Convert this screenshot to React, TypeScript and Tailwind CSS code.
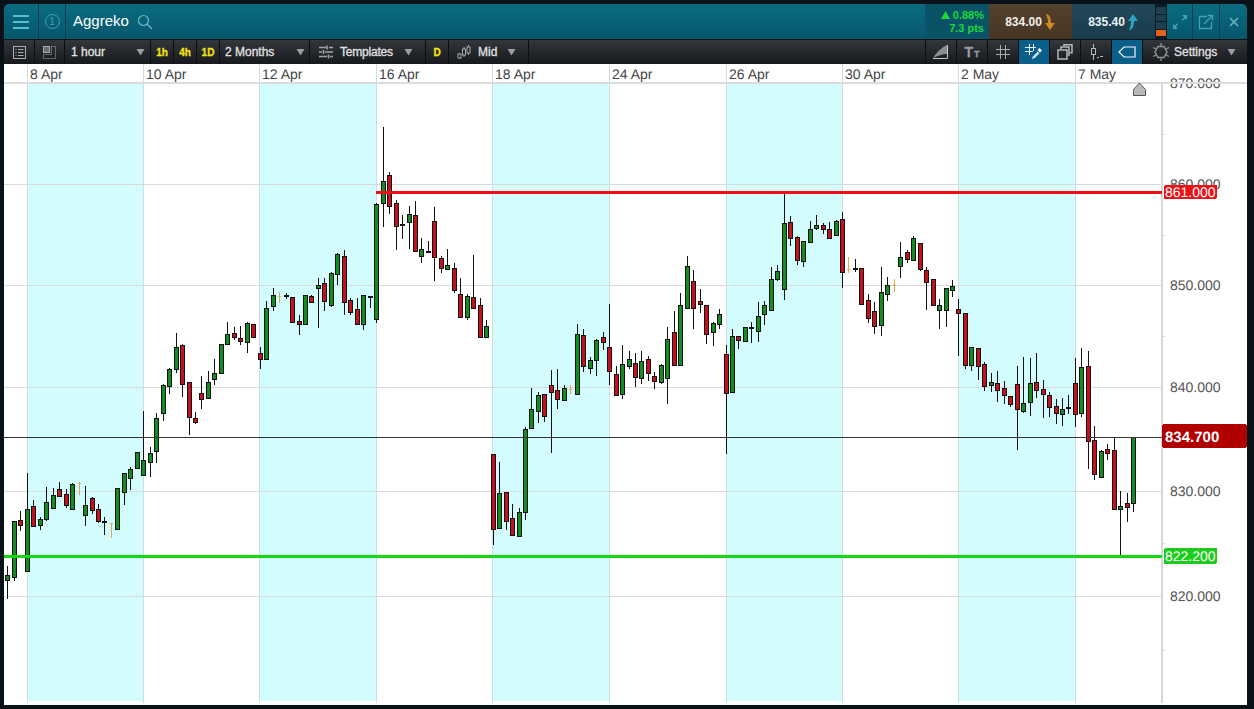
import type { ReactNode } from "react";

type Candle = [number, number, number, number, "g" | "r" | "k" | "o"];

// high, body top, body bottom, low (page pixels), one per hour bar
const candles: Candle[] = [
  [566, 575, 580, 599, "g"], [521, 521, 577, 581, "g"], [511, 520, 525, 531, "r"], [473, 509, 571, 572, "g"],
  [500, 506, 526, 526, "r"], [517, 519, 525, 530, "g"], [487, 502, 519, 521, "g"], [488, 495, 508, 508, "g"],
  [482, 489, 496, 496, "r"], [489, 494, 505, 508, "r"], [483, 484, 509, 509, "g"], [482, 483, 483, 495, "o"],
  [486, 505, 515, 526, "g"], [497, 498, 510, 514, "r"], [504, 509, 521, 523, "r"], [517, 522, 522, 535, "k"],
  [523, 523, 523, 538, "o"], [488, 488, 529, 529, "g"], [473, 473, 492, 505, "g"], [467, 469, 478, 490, "g"],
  [452, 452, 468, 468, "g"], [411, 460, 475, 475, "g"], [447, 453, 462, 477, "g"], [413, 418, 451, 463, "g"],
  [384, 385, 413, 421, "g"], [368, 369, 386, 394, "g"], [333, 347, 369, 373, "g"], [344, 345, 384, 397, "r"],
  [382, 382, 417, 435, "r"], [412, 418, 422, 424, "r"], [376, 393, 399, 409, "r"], [371, 382, 398, 398, "g"],
  [359, 373, 379, 385, "g"], [344, 344, 373, 373, "g"], [322, 334, 344, 344, "g"], [327, 333, 337, 340, "r"],
  [326, 338, 341, 345, "r"], [322, 323, 342, 353, "g"], [324, 324, 337, 337, "r"], [347, 353, 359, 369, "r"],
  [301, 308, 359, 359, "g"], [288, 295, 306, 311, "g"], [292, 296, 296, 303, "o"], [293, 296, 296, 299, "k"],
  [297, 297, 322, 323, "r"], [315, 321, 324, 335, "r"], [295, 295, 324, 324, "g"], [295, 296, 302, 303, "r"],
  [278, 285, 288, 328, "g"], [278, 283, 301, 311, "r"], [272, 273, 305, 307, "g"], [253, 254, 274, 285, "g"],
  [250, 256, 302, 315, "r"], [298, 300, 312, 315, "r"], [298, 309, 324, 324, "r"], [295, 295, 324, 330, "g"],
  [297, 297, 297, 308, "k"], [203, 204, 319, 323, "g"], [127, 181, 203, 227, "g"], [172, 175, 206, 214, "r"],
  [200, 203, 226, 250, "r"], [215, 225, 225, 239, "k"], [206, 214, 222, 249, "g"], [201, 215, 251, 252, "r"],
  [238, 249, 256, 263, "g"], [241, 252, 252, 253, "k"], [207, 221, 257, 281, "r"], [256, 258, 268, 273, "r"],
  [249, 265, 269, 270, "g"], [263, 268, 290, 293, "r"], [278, 294, 317, 317, "r"], [294, 296, 317, 320, "g"],
  [255, 297, 308, 308, "r"], [298, 305, 337, 337, "r"], [320, 326, 337, 337, "g"], [454, 454, 529, 545, "r"],
  [462, 493, 528, 528, "g"], [492, 492, 521, 530, "r"], [504, 518, 535, 535, "r"], [508, 512, 536, 536, "g"],
  [427, 429, 512, 520, "g"], [388, 409, 428, 428, "g"], [392, 395, 411, 423, "g"], [394, 394, 416, 422, "r"],
  [370, 385, 392, 453, "r"], [369, 390, 399, 409, "r"], [385, 388, 400, 401, "g"], [385, 389, 389, 394, "o"],
  [324, 334, 394, 394, "g"], [329, 335, 366, 372, "r"], [357, 360, 368, 374, "g"], [339, 340, 360, 376, "g"],
  [332, 337, 342, 350, "r"], [304, 347, 371, 385, "r"], [366, 374, 395, 395, "r"], [345, 364, 394, 399, "g"],
  [351, 359, 366, 369, "g"], [353, 363, 377, 387, "r"], [351, 361, 378, 384, "g"], [356, 359, 373, 381, "r"],
  [372, 376, 381, 389, "r"], [364, 365, 382, 384, "g"], [327, 339, 378, 404, "g"], [311, 332, 365, 365, "r"],
  [293, 305, 365, 365, "g"], [256, 266, 308, 308, "g"], [270, 281, 308, 329, "r"], [289, 301, 304, 313, "r"],
  [305, 305, 334, 344, "r"], [322, 323, 332, 346, "g"], [309, 314, 324, 329, "g"], [345, 354, 393, 454, "r"],
  [329, 336, 392, 393, "g"], [336, 336, 340, 349, "r"], [327, 327, 341, 341, "g"], [322, 328, 328, 343, "k"],
  [302, 316, 331, 342, "g"], [301, 305, 314, 325, "g"], [267, 279, 310, 310, "g"], [265, 271, 279, 281, "g"],
  [194, 223, 289, 300, "g"], [216, 222, 238, 246, "r"], [236, 237, 260, 265, "r"], [241, 241, 261, 267, "g"],
  [221, 229, 242, 243, "g"], [215, 225, 228, 230, "g"], [223, 225, 229, 234, "r"], [222, 229, 238, 239, "r"],
  [220, 221, 235, 235, "g"], [212, 219, 272, 288, "r"], [257, 269, 269, 273, "o"], [259, 269, 269, 272, "k"],
  [268, 268, 304, 305, "r"], [294, 300, 318, 323, "r"], [302, 311, 326, 334, "r"], [267, 292, 325, 336, "g"],
  [277, 285, 294, 301, "g"], [279, 285, 285, 292, "o"], [242, 257, 266, 278, "g"], [250, 252, 259, 263, "r"],
  [236, 238, 260, 261, "g"], [243, 243, 269, 271, "r"], [267, 270, 282, 310, "r"], [279, 279, 305, 305, "r"],
  [299, 305, 310, 329, "g"], [288, 288, 310, 327, "g"], [280, 286, 290, 297, "g"], [299, 309, 313, 356, "r"],
  [313, 313, 365, 369, "r"], [347, 347, 365, 371, "g"], [348, 348, 366, 380, "r"], [362, 364, 386, 391, "r"],
  [373, 382, 385, 392, "g"], [371, 383, 390, 402, "r"], [381, 388, 395, 404, "r"], [396, 396, 404, 407, "r"],
  [366, 384, 409, 450, "r"], [357, 403, 411, 413, "g"], [358, 383, 402, 416, "g"], [353, 382, 390, 398, "r"],
  [380, 389, 394, 418, "r"], [392, 395, 407, 417, "r"], [399, 406, 413, 424, "r"], [398, 409, 414, 426, "g"],
  [395, 408, 408, 414, "k"], [358, 383, 414, 427, "r"], [348, 367, 413, 417, "g"], [351, 366, 441, 469, "r"],
  [426, 440, 474, 480, "r"], [450, 451, 477, 478, "g"], [444, 449, 453, 460, "r"], [438, 450, 509, 509, "r"],
  [491, 506, 509, 555, "g"], [493, 503, 507, 522, "r"], [437, 437, 503, 512, "g"],
];

const bands = [27, 259, 492, 726, 958];
const sessionLines = [27, 143, 259, 376, 492, 609, 726, 842, 958, 1075];
const dates = ["8 Apr", "10 Apr", "12 Apr", "16 Apr", "18 Apr", "24 Apr", "26 Apr", "30 Apr", "2 May", "7 May"];
const prices = [
  { label: "870.000", y: 83 },
  { label: "860.000", y: 184 },
  { label: "850.000", y: 285 },
  { label: "840.000", y: 387 },
  { label: "830.000", y: 491 },
  { label: "820.000", y: 596 },
];
const minorTicks = [134, 235, 336, 439, 543, 650];

const Caret = () => (
  <svg width="9" height="8" viewBox="0 0 9 8" className="shrink-0">
    <path d="M0.5 1h8L4.500 7.500z" fill="#9a9ea2" />
  </svg>
);

const Cell = ({ w, active, children, className }: { w: number; active?: boolean; children?: ReactNode; className?: string }) => (
  <div
    style={{ width: w }}
    className={`flex h-full shrink-0 items-center border-r border-[#0c0e11] ${active ? "bg-[#0a5f8a]" : ""} ${className ?? "justify-center"}`}
  >
    {children}
  </div>
);

const ListIcon = () => (
  <svg width="15" height="15" viewBox="0 0 15 15" fill="none" stroke="#a8acb0">
    <rect x="1.500" y="1.500" width="12" height="12" />
    <path d="M3.500 4.500h1M6 4.500h5.500M3.500 7.500h1M6 7.500h5.500M3.500 10.500h1M6 10.500h5.500" />
  </svg>
);

const LayoutIcon = () => (
  <svg width="15" height="15" viewBox="0 0 15 15" fill="none" stroke="#a8acb0">
    <rect x="1.500" y="1.500" width="6" height="6" fill="#6a6e72" />
    <path d="M9.500 1.500h4v12h-12v-4h8z" strokeDasharray="1 1" />
  </svg>
);

const SlidersIcon = () => (
  <svg width="16" height="14" viewBox="0 0 16 14" fill="none" stroke="#a2a6aa" strokeWidth="1.500">
    <path d="M1 2.500h7M11 2.500h4M1 7h3M7 7h8M1 11.500h8M12 11.500h3" />
    <path d="M9 .5v4M5.500 5v4M10.500 9.500v4" />
  </svg>
);

const MidIcon = () => (
  <svg width="14" height="15" viewBox="0 0 14 15" fill="none" stroke="#a2a6aa">
    <path d="M2.500 8v1M2.500 13v1M7 2v2M7 10v2M11.500 0v2M11.500 8v2" />
    <rect x="1" y="9" width="3" height="4" />
    <rect x="5.500" y="4" width="3" height="6" />
    <rect x="10" y="2" width="3" height="6" />
  </svg>
);

const DrawIcon = () => (
  <svg width="18" height="16" viewBox="0 0 18 16" fill="none">
    <path d="M1 14C5 8 10 3 15 1v9C10 10 6 12 1 14z" fill="#8a8e90" />
    <path d="M15.500 1v13.500H1" stroke="#c4c6c8" />
  </svg>
);

const HashIcon = () => (
  <svg width="16" height="16" viewBox="0 0 16 16" stroke="#a8acb0">
    <path d="M5.500 1v14M10.500 1v14M1 5.500h14M1 10.500h14" />
  </svg>
);

const HashPenIcon = () => (
  <svg width="18" height="16" viewBox="0 0 18 16" fill="none">
    <path d="M4.500 0v11M8.500 0v7M0 3.500h11M0 7.500h8" stroke="#e8eef2" />
    <path d="M7 15l.8-2.500 5-5 1.700 1.700-5 5z" fill="#cfe6f0" />
    <path d="M12.500 6l2-2 2.500 2.500-2 2z" fill="#fff" />
  </svg>
);

const CopiesIcon = () => (
  <svg width="16" height="16" viewBox="0 0 16 16" fill="none" stroke="#b4b8bc">
    <rect x="1" y="6" width="9" height="9" strokeWidth="1.500" />
    <path d="M4 5V3h8v8h-1.500M7 2V.8h8v8h-2" strokeWidth="1.500" />
  </svg>
);

const CandleIcon = () => (
  <svg width="15" height="16" viewBox="0 0 15 16" fill="none" stroke="#b4b8bc">
    <path d="M4.500 0v4M4.500 11v5" />
    <rect x="2.500" y="4.500" width="4" height="6" />
    <path d="M8 13.500h2M11 12.500h3" />
  </svg>
);

const TagIcon = () => (
  <svg width="18" height="12" viewBox="0 0 18 12" fill="none" stroke="#f2f6f8" strokeWidth="1.200">
    <path d="M1 6l5-5h11v10H6z" />
  </svg>
);

const GearIcon = () => (
  <svg width="18" height="18" viewBox="0 0 18 18" fill="none" stroke="#8e9296">
    <path d="M6 3.500h6L15 9l-3 5.500H6L3 9z" strokeWidth="1.500" />
    <path d="M9 0v3M9 15v3M1 4.500l3 1.500M17 4.500l-3 1.500M1 13.500l3-1.500M17 13.500l-3-1.500" strokeWidth="1.300" />
  </svg>
);

const CurveArrow = ({ color, up }: { color: string; up?: boolean }) => (
  <svg width="11" height="16" viewBox="0 0 11 16" className={up ? "-scale-y-100" : ""}>
    <path d="M1 0c3 0 5 3 5 9h4l-5 7-5-7h3C3 5 2 3 1 0z" fill={color} />
  </svg>
);

const Header = () => (
  <div className="flex h-[35px] shrink-0 items-stretch overflow-hidden rounded-t-[5px] bg-gradient-to-b from-[#0a6c80] to-[#07566c]">
    <div className="flex w-[35px] shrink-0 items-center justify-center border-r border-[#06404f]">
      <svg width="16" height="14" viewBox="0 0 16 14" stroke="#58bccb" strokeWidth="2">
        <path d="M0 1h16M0 7h16M0 13h16" />
      </svg>
    </div>
    <div className="flex w-[27px] shrink-0 items-center justify-center border-r border-[#06404f]">
      <span className="flex size-[15px] items-center justify-center rounded-full border border-[#3fa2b4] text-[10px] text-[#3fa2b4]">1</span>
    </div>
    <div className="flex min-w-0 flex-1 items-center pl-[7px]">
      <span className="text-[15px] text-white">Aggreko</span>
      <svg width="16" height="16" viewBox="0 0 16 16" fill="none" stroke="#6fb6c6" strokeWidth="1.200" className="ml-[8px]">
        <circle cx="6.500" cy="6.500" r="5" />
        <path d="M10 10l5 5" />
      </svg>
    </div>
    <div className="flex w-[64px] shrink-0 flex-col items-end justify-center bg-[#0a5366] pr-[5px] text-[11px] leading-[13px] font-bold text-[#16d93a]">
      <span className="flex items-center gap-[3px]">
        <svg width="9" height="8" viewBox="0 0 9 8" fill="#16d93a">
          <path d="M4.500 0L9 8H0z" />
        </svg>
        0.88%
      </span>
      <span>7.3 pts</span>
    </div>
    <div className="flex w-[83px] shrink-0 items-center justify-center gap-[3px] bg-gradient-to-b from-[#54412c] to-[#463624] text-[12px] font-bold text-[#f2efe8]">
      834.00
      <CurveArrow color="#c98a1e" />
    </div>
    <div className="flex w-[83px] shrink-0 items-center justify-center gap-[3px] bg-gradient-to-b from-[#21485a] to-[#1b3c4c] text-[12px] font-bold text-[#e8f2f4]">
      835.40
      <CurveArrow color="#2aa3c4" up />
    </div>
    <div className="flex w-[12px] shrink-0 flex-col gap-px bg-[#0c1c24] px-px py-[3px]">
      <div className="flex-1 bg-[#1d3f4e]" />
      <div className="flex-1 bg-[#1d3f4e]" />
      <div className="flex-1 bg-[#1d3f4e]" />
      <div className="flex-1 bg-[#e8601a]" />
    </div>
    <div className="flex w-[26px] shrink-0 items-center justify-center border-r border-[#06404f]">
      <svg width="14" height="14" viewBox="0 0 14 14" fill="#3fa2b4">
        <path d="M9 0h5v5l-1.700-1.700-2.500 2.500-1.100-1.100 2.500-2.500zM5 14H0V9l1.700 1.700 2.500-2.500 1.100 1.100-2.500 2.500z" />
      </svg>
    </div>
    <div className="flex w-[27px] shrink-0 items-center justify-center border-r border-[#06404f]">
      <svg width="16" height="16" viewBox="0 0 16 16" fill="none" stroke="#3fa2b4" strokeWidth="1.300">
        <path d="M9 2.500H1.500v12h12V8" />
        <path d="M6 10l8-8M9.500 1.500h5v5" />
      </svg>
    </div>
    <div className="flex w-[27px] shrink-0 items-center justify-center">
      <svg width="10" height="10" viewBox="0 0 10 10" stroke="#6fb6c6" strokeWidth="1.500">
        <path d="M1 1l8 8M9 1l-8 8" />
      </svg>
    </div>
  </div>
);

const Toolbar = () => (
  <div className="mt-px flex h-6 shrink-0 items-stretch bg-gradient-to-b from-[#33373c] to-[#17191d] text-[12px] text-[#e2e2e2] [-webkit-text-stroke:0.3px]">
    <Cell w={31}><ListIcon /></Cell>
    <Cell w={30}><LayoutIcon /></Cell>
    <Cell w={86} className="justify-between pr-[5px] pl-[6px]">1 hour<Caret /></Cell>
    {["1h", "4h", "1D"].map((label) => (
      <Cell key={label} w={23} className="justify-center text-[10px] font-bold text-[#f2e313]">{label}</Cell>
    ))}
    <Cell w={90} className="justify-between pr-[4px] pl-[5px]">2 Months<Caret /></Cell>
    <Cell w={116} className="justify-start pl-[8px]">
      <SlidersIcon />
      <span className="ml-[6px] tracking-[-0.2px]">Templates</span>
      <span className="ml-[11px]"><Caret /></span>
    </Cell>
    <Cell w={23} className="justify-center text-[10px] font-bold text-[#f2e313]">D</Cell>
    <Cell w={80} className="justify-start pl-[8px]">
      <MidIcon />
      <span className="ml-[7px]">Mid</span>
      <span className="ml-[10px]"><Caret /></span>
    </Cell>
    <div className="flex-1 border-r border-[#0c0e11]" />
    <Cell w={31}><DrawIcon /></Cell>
    <Cell w={31}>
      <span className="flex items-baseline gap-px font-bold text-[#9a9ea2]">
        <span className="text-[14px]">T</span>
        <span className="text-[9px]">T</span>
      </span>
    </Cell>
    <Cell w={31}><HashIcon /></Cell>
    <Cell w={31} active><HashPenIcon /></Cell>
    <Cell w={31}><CopiesIcon /></Cell>
    <Cell w={31}><CandleIcon /></Cell>
    <Cell w={31} active><TagIcon /></Cell>
    <div className="flex w-[104px] shrink-0 items-center pl-[9px]">
      <GearIcon />
      <span className="ml-[4px]">Settings</span>
      <span className="ml-[10px]"><Caret /></span>
    </div>
  </div>
);

const candleX = (i: number) => Math.floor(27.3 + 6.47 * (i - 3));

const bodyFill = { g: "#138c21", r: "#c5111e" };

const Chart = () => (
  <svg viewBox="4 64 1243 641" className="block h-[641px] w-[1243px] bg-white" shapeRendering="crispEdges">
    {bands.map((x) => (
      <rect key={x} x={x} y={84} width={116.500} height={617} fill="#d3fcfe" />
    ))}
    {sessionLines.map((x) => (
      <rect key={x} x={x} y={64} width={1} height={639} fill="#cfdfe1" />
    ))}
    {prices.map((p) => (
      <rect key={p.label} x={4} y={p.y} width={1158} height={1} fill="#dadada" />
    ))}
    <rect x={1161} y={84} width={2} height={619} fill="#d8d8d8" />
    {minorTicks.map((y) => (
      <rect key={y} x={1163} y={y} width={3} height={1} fill="#e2e2e2" />
    ))}

    {dates.map((d, i) => (
      <text key={d} x={sessionLines[i] + 3} y={79} fontSize={14} fill="#444" textRendering="geometricPrecision">
        {d}
      </text>
    ))}
    {prices.map((p) => (
      <text key={p.label} x={1170} y={p.y + 5} fontSize={14} fill="#555" textRendering="geometricPrecision">
        {p.label}
      </text>
    ))}
    {/* header rule runs over the top price label */}
    <rect x={4} y={82} width={1243} height={2} fill="#dcdcdc" />

    <path d="M1133.500 89.500l6-6.500 6 6.500v6h-12z" fill="#b9b9b9" stroke="#555" shapeRendering="auto" />

    {candles.map(([hi, top, bot, lo, kind], i) => {
      const x = candleX(i);
      if (kind === "o") {
        return (
          <g key={i} fill="#dfa94e">
            <rect x={x} y={hi} width={1} height={lo - hi} />
            <rect x={x - 1} y={top} width={3} height={1} />
          </g>
        );
      }
      if (kind === "k") {
        return (
          <g key={i} fill="#111">
            <rect x={x} y={hi} width={1} height={lo - hi} />
            <rect x={x - 2} y={top - 1} width={5} height={2} />
          </g>
        );
      }
      return (
        <g key={i}>
          <rect x={x} y={hi} width={1} height={lo - hi} fill="#111" />
          <rect x={x - 1.500} y={top + 0.500} width={4} height={bot - top} fill={bodyFill[kind]} stroke="#111" />
        </g>
      );
    })}

    <rect x={4} y={437} width={1158} height={1} fill="#333" />
    <rect x={376} y={191} width={786} height={3} fill="#ee0f16" />
    <rect x={4} y={555} width={1158} height={3} fill="#12d912" />

    <rect x={1164} y={185} width={53} height={14} rx={2} fill="#f00f14" />
    <text x={1165} y={197} fontSize={14} fill="#fff" textRendering="geometricPrecision">861.000</text>
    <rect x={1162} y={424} width={85} height={24} rx={3} fill="#b00000" />
    <text x={1165} y={442} fontSize={15} fontWeight="bold" fill="#fff" textRendering="geometricPrecision">834.700</text>
    <rect x={1164} y={548} width={53} height={16} rx={2} fill="#1ccc1c" />
    <text x={1165} y={561} fontSize={14} fill="#fff" textRendering="geometricPrecision">822.200</text>
  </svg>
);

const App = () => {
  return (
    <div className="flex h-[709px] w-[1254px] flex-col overflow-hidden bg-[#0a1219] pt-1 pl-1 font-['Liberation_Sans',Arial,sans-serif]">
      <div className="flex w-[1243px] flex-col">
        <Header />
        <Toolbar />
        <Chart />
      </div>
    </div>
  );
};

export default App;
